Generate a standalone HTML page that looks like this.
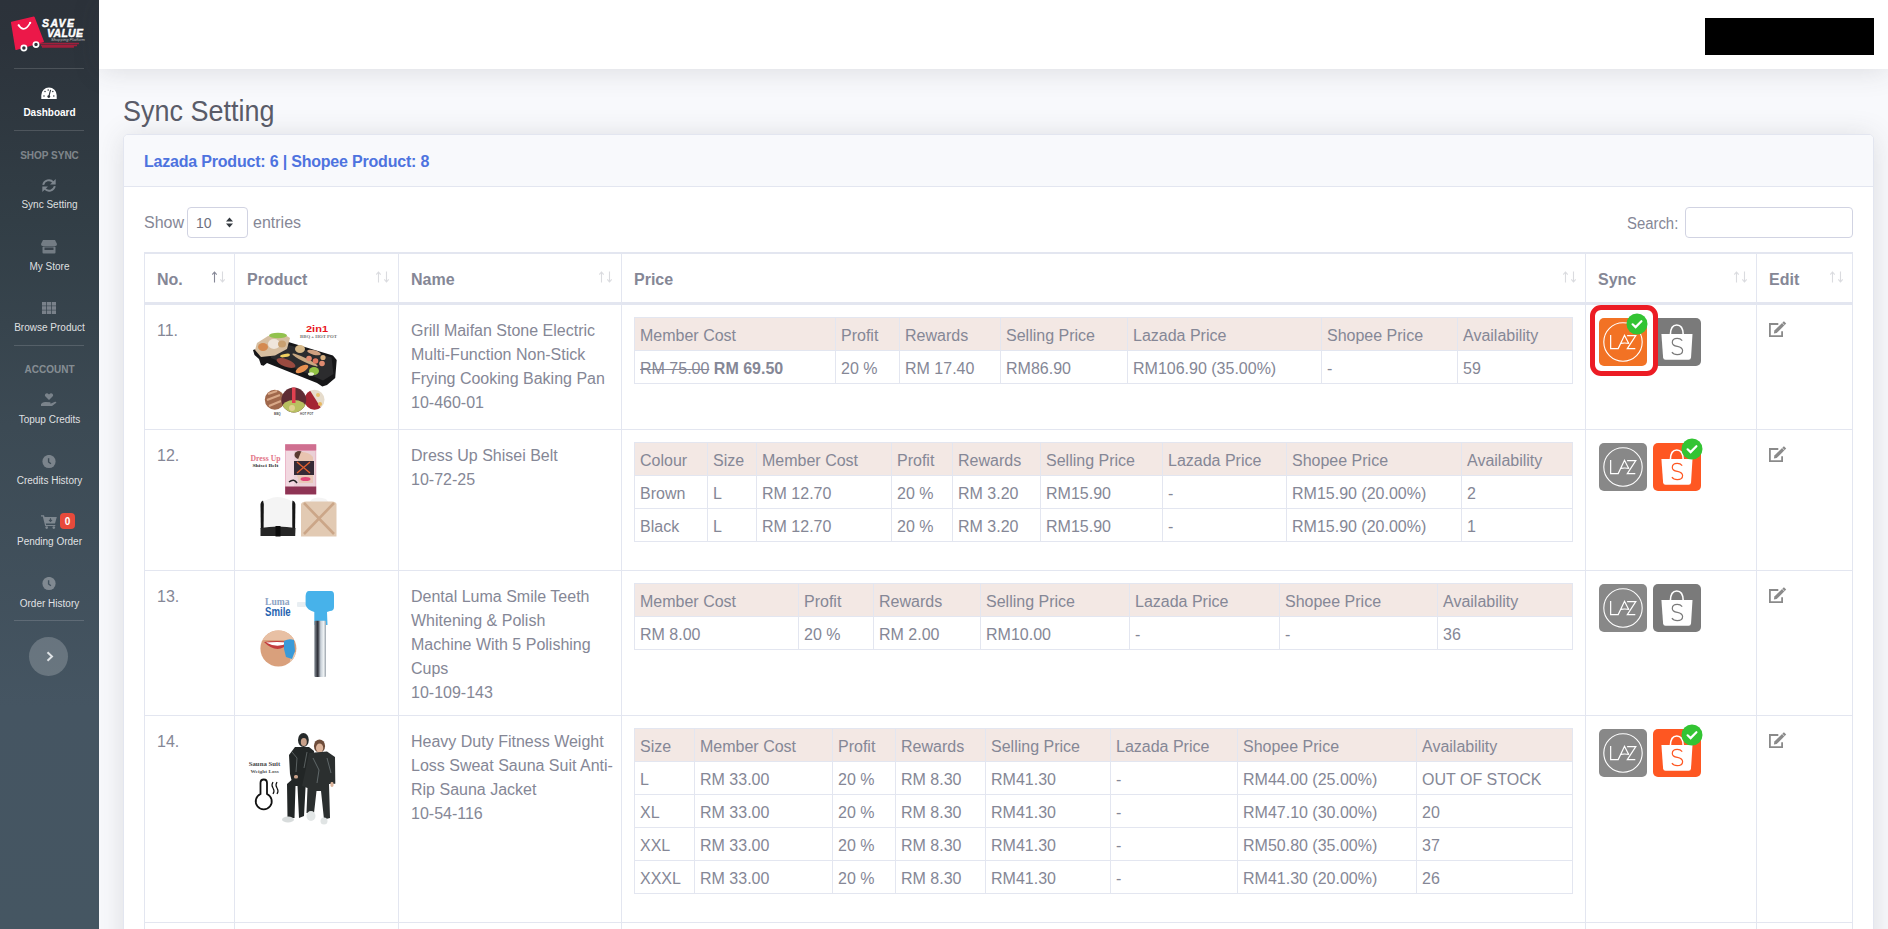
<!DOCTYPE html>
<html><head><meta charset="utf-8">
<style>
*{box-sizing:border-box;margin:0;padding:0}
html,body{width:1888px;height:929px;overflow:hidden;background:#f8f9fc;font-family:"Liberation Sans",sans-serif;color:#858796}
.abs{position:absolute}
#sidebar{position:absolute;left:0;top:0;width:99px;height:929px;background:linear-gradient(180deg,rgb(44,50,58) 0px,rgb(44,51,59) 40px,rgb(50,62,70) 221px,rgb(60,74,84) 426px,rgb(69,85,98) 706px,rgb(69,86,98) 929px)}
.sb-hr{position:absolute;left:14px;width:70px;height:1px;background:rgba(255,255,255,.15)}
.sb-lbl{position:absolute;left:0;width:99px;text-align:center;font-size:10px;line-height:12px;color:rgba(255,255,255,.85);white-space:nowrap}
.sb-head{position:absolute;left:0;width:99px;text-align:center;font-size:10px;line-height:12px;font-weight:bold;color:rgba(255,255,255,.4);white-space:nowrap}
.sb-ico{position:absolute}
#topbar{position:absolute;left:99px;top:0;width:1789px;height:69px;background:#fff;box-shadow:0 2px 28px 0 rgba(58,59,69,.15)}
#card{position:absolute;left:123px;top:134px;width:1751px;height:900px;background:#fff;border:1px solid #e3e6f0;border-radius:5px;box-shadow:0 2px 28px 0 rgba(58,59,69,.15);overflow:hidden}
#cardhead{position:absolute;left:0;top:0;width:100%;height:52px;background:#f8f9fc;border-bottom:1px solid #e3e6f0}
table{border-collapse:separate;border-spacing:0;table-layout:fixed}
#main{position:absolute;left:20px;top:117px;width:1709px;border-top:1px solid #e3e6f0;border-left:1px solid #e3e6f0}
#main>thead>tr>th,#main>tbody>tr>td{border-top:1px solid #e3e6f0;border-right:1px solid #e3e6f0;padding:12px 12px;vertical-align:top;font-size:16px;line-height:24px;text-align:left;white-space:nowrap}
#main>thead>tr>th{border-bottom:2px solid #e3e6f0;font-weight:bold;height:51px;position:relative;color:#858796;padding-top:14px;padding-bottom:10px}
#main>tbody>tr>td.tx{padding-top:14px;padding-bottom:10px}
.sort{position:absolute;right:8px;top:17px}
.inner{width:939px;border-top:1px solid #e3e6f0;border-left:1px solid #e3e6f0}
.inner th,.inner td{border-bottom:1px solid #e3e6f0;border-right:1px solid #e3e6f0;padding:5.5px 5px 2.5px;font-size:16px;line-height:24px;font-weight:normal;white-space:nowrap;overflow:hidden;text-align:left;vertical-align:top}
.inner th{background:#f3e8e4;padding-top:5.5px;padding-bottom:2.5px}
</style></head><body>
<svg width="0" height="0" style="position:absolute">
<defs>
<symbol id="laz" viewBox="0 0 48 48">
  <circle cx="24" cy="24" r="19.2" fill="none" stroke="#fff" stroke-width="1.1"/>
  <path d="M11.65,17.1 L11.65,30.6 L19.2,30.6 L25.5,17.3 L29.7,25.5 M21.9,25.4 Q26,24.6 30.2,25.5 M28.1,17.6 L36.8,17.6 L28.3,30.6 L36.3,30.6" fill="none" stroke="#fff" stroke-width="1.2" stroke-linejoin="miter"/>
</symbol>
<symbol id="shp" viewBox="0 0 48 48">
  <path d="M17.4,16.5 Q17.6,7 23.8,7 Q30,7 30.2,16.5" fill="none" stroke="#fff" stroke-width="1.6"/>
  <path d="M8.4,16.1 L39.5,16.1 L38,39.5 Q37.8,41.7 35.6,41.7 L12.5,41.7 Q10.3,41.7 10.1,39.5Z" fill="#fff"/>
</symbol>
<symbol id="chk" viewBox="0 0 22 22">
  <circle cx="11" cy="11" r="10.5" fill="#33c433"/>
  <path d="M6.6,11.3 L9.6,14.1 L15.4,8.2" fill="none" stroke="#fff" stroke-width="2.2" stroke-linecap="round"/>
</symbol>
<symbol id="edit" viewBox="0 0 18 17">
  <path d="M9.3,3 L0.9,3 L0.9,15.1 L13.1,15.1 L13.1,10.2" fill="none" stroke="#8a8a8a" stroke-width="1.8"/>
  <polygon points="4.9,12.4 5.4,9.6 14.9,0.3 17.2,2.5 7.7,12" fill="#8a8a8a"/>
  <path d="M13.2,2 L15.5,4.2" stroke="#fff" stroke-width=".7"/>
</symbol>
</defs></svg>

<div id="sidebar">
  <!-- logo -->
  <svg class="abs" style="left:0;top:0" width="99" height="60" viewBox="0 0 99 60">
    <polygon points="11.7,22.4 33.9,17.2 43.2,41.5 16.1,49.3" fill="#ec1849" stroke="#ec1849" stroke-width="1.5" stroke-linejoin="round"/>
    <path d="M18.7,25.3 Q24,33.5 30.2,22.8" fill="none" stroke="#fff" stroke-width="1.6" stroke-linecap="round"/>
    <circle cx="18.7" cy="25.3" r="1.1" fill="#fff"/><circle cx="30.2" cy="22.8" r="1.1" fill="#fff"/>
    <path d="M40,43.5 L79,43.5 M41,45.5 L77,45.5 M42,47 L74,47" stroke="#a11f3c" stroke-width="1.3"/>
    <circle cx="23.9" cy="48" r="2.6" fill="#2c323a" stroke="#fff" stroke-width="1.7"/>
    <circle cx="36" cy="44.6" r="2.6" fill="#2c323a" stroke="#fff" stroke-width="1.7"/>
    <text x="42" y="27" font-family="Liberation Sans" font-weight="bold" font-style="italic" font-size="10.5" fill="#fff" stroke="#fff" stroke-width=".45" textLength="32" lengthAdjust="spacing">SAVE</text>
    <text x="47" y="36.6" font-family="Liberation Sans" font-weight="bold" font-style="italic" font-size="10.5" fill="#fff" stroke="#fff" stroke-width=".45" textLength="36" lengthAdjust="spacing">VALUE</text>
    <text x="51" y="41" font-family="Liberation Sans" font-style="italic" font-size="2.6" fill="#bbb" textLength="34" lengthAdjust="spacingAndGlyphs">Shopping Platform</text>
  </svg>
  <div class="sb-hr" style="top:68px"></div>
  <!-- dashboard -->
  <svg class="sb-ico" style="left:41px;top:87px" width="16" height="12" viewBox="0 0 16 12"><path d="M0.3,12 L0.3,8.2 A7.7,7.7 0 0 1 15.7,8.2 L15.7,12Z" fill="#fff"/><path d="M7.8,9.6 L9.6,2.9" stroke="#2c323a" stroke-width="1.1"/><circle cx="7.8" cy="9.6" r="1.4" fill="#2c323a"/><circle cx="4" cy="4.6" r=".75" fill="#2c323a"/><circle cx="3" cy="9" r=".75" fill="#2c323a"/><circle cx="7.2" cy="3" r=".75" fill="#2c323a"/><circle cx="11.8" cy="4.6" r=".75" fill="#2c323a"/><circle cx="12.8" cy="9" r=".75" fill="#2c323a"/></svg>
  <div class="sb-lbl" style="top:107px;font-weight:bold;color:#fff">Dashboard</div>
  <div class="sb-hr" style="top:130px"></div>
  <div class="sb-head" style="top:150px">SHOP SYNC</div>
  <!-- sync icon -->
  <svg class="sb-ico" style="left:42px;top:179px" width="14" height="13" viewBox="0 0 14 13"><path d="M1.2,5.9 A5.8,5.8 0 0 1 11.3,3.3" fill="none" stroke="#7c858d" stroke-width="1.9"/><polygon points="8,5.6 13.7,5.6 13.7,0" fill="#7c858d"/><path d="M12.8,7.1 A5.8,5.8 0 0 1 2.7,9.7" fill="none" stroke="#7c858d" stroke-width="1.9"/><polygon points="6,7.4 0.3,7.4 0.3,13" fill="#7c858d"/></svg>
  <div class="sb-lbl" style="top:199px">Sync Setting</div>
  <!-- store -->
  <svg class="sb-ico" style="left:41px;top:240px" width="16" height="14" viewBox="0 0 16 14"><path d="M2,0 L14,0 L16,4 Q16,6 14.5,6 L1.5,6 Q0,6 0,4Z" fill="#737c84"/><rect x="1.5" y="6.5" width="13" height="7" rx="1" fill="#737c84"/><rect x="3.5" y="7.5" width="9" height="2.5" fill="#39434c"/></svg>
  <div class="sb-lbl" style="top:261px">My Store</div>
  <!-- grid -->
  <svg class="sb-ico" style="left:42px;top:302px" width="14" height="12" viewBox="0 0 14 12" fill="#79818a"><rect x="0.0" y="0.0" width="4.2" height="3.6"/><rect x="4.9" y="0.0" width="4.2" height="3.6"/><rect x="9.8" y="0.0" width="4.2" height="3.6"/><rect x="0.0" y="4.2" width="4.2" height="3.6"/><rect x="4.9" y="4.2" width="4.2" height="3.6"/><rect x="9.8" y="4.2" width="4.2" height="3.6"/><rect x="0.0" y="8.4" width="4.2" height="3.6"/><rect x="4.9" y="8.4" width="4.2" height="3.6"/><rect x="9.8" y="8.4" width="4.2" height="3.6"/></svg>
  <div class="sb-lbl" style="top:322px">Browse Product</div>
  <div class="sb-hr" style="top:345px"></div>
  <div class="sb-head" style="top:364px">ACCOUNT</div>
  <!-- topup -->
  <svg class="sb-ico" style="left:41px;top:393px" width="16" height="14" viewBox="0 0 16 14" fill="#7a838b"><path d="M8,7 L4.5,3.6 Q3.2,2 4.6,0.7 Q6.3,-0.3 8,1.5 Q9.7,-0.3 11.4,0.7 Q12.8,2 11.5,3.6Z"/><path d="M0,11 Q2,8.5 5,9 L9,9.2 Q10,9.6 9.3,10.4 L6.5,10.4 L10,10.6 L14,8.8 Q15.5,8.6 15.3,9.8 L11,13 L0,13Z"/></svg>
  <div class="sb-lbl" style="top:414px">Topup Credits</div>
  <!-- clock -->
  <svg class="sb-ico" style="left:42px;top:455px" width="14" height="14" viewBox="0 0 14 14"><circle cx="7" cy="6.5" r="6.6" fill="#7b848c"/><path d="M6.6,3.2 L6.6,7 L8.9,8.8" fill="none" stroke="#3c4a54" stroke-width="1.4"/></svg>
  <div class="sb-lbl" style="top:475px">Credits History</div>
  <!-- cart -->
  <svg class="sb-ico" style="left:41px;top:515px" width="16" height="14" viewBox="0 0 16 14" fill="#7f8890"><path d="M0,0.3 L3,0.3 L3.6,2 L15.8,2 L14,8.5 L4.8,8.5 L5.2,10 L14.3,10 L14.3,11 L4.2,11 L1.8,1.6 L0,1.6Z"/><circle cx="5.7" cy="12.6" r="1.3"/><circle cx="12.8" cy="12.6" r="1.3"/><path d="M9.5,3.3 L9.5,6.3 M8,4.9 L9.5,6.5 L11,4.9" stroke="#434f5a" stroke-width="1.1" fill="none"/></svg>
  <div class="abs" style="left:60px;top:513px;width:15px;height:16px;border-radius:4px;background:#e74a3b;color:#fff;font-size:10px;font-weight:bold;line-height:18px;text-align:center">0</div>
  <div class="sb-lbl" style="top:536px">Pending Order</div>
  <svg class="sb-ico" style="left:42px;top:577px" width="14" height="14" viewBox="0 0 14 14"><circle cx="7" cy="6.5" r="6.6" fill="#808991"/><path d="M6.6,3.2 L6.6,7 L8.9,8.8" fill="none" stroke="#42525e" stroke-width="1.4"/></svg>
  <div class="sb-lbl" style="top:598px">Order History</div>
  <div class="sb-hr" style="top:620px"></div>
  <div class="abs" style="left:29px;top:637px;width:39px;height:39px;border-radius:50%;background:rgba(255,255,255,.2)"></div>
  <svg class="abs" style="left:46px;top:651px" width="8" height="11" viewBox="0 0 8 11"><path d="M1.5,1.2 L6,5.5 L1.5,9.8" fill="none" stroke="#dfe3e6" stroke-width="2"/></svg>
</div>

<div id="topbar"><div class="abs" style="left:1606px;top:18px;width:169px;height:37px;background:#000"></div></div>

<div class="abs" style="left:123px;top:93px;font-size:29px;line-height:36px;transform:scaleX(.93);transform-origin:0 0;color:#5a5c69;white-space:nowrap">Sync Setting</div>

<div id="card">
  <div id="cardhead"><div class="abs" style="left:20px;top:15px;font-size:16px;line-height:24px;letter-spacing:-0.2px;font-weight:bold;color:#4e73df;white-space:nowrap">Lazada Product: 6 | Shopee Product: 8</div></div>
  <!-- show entries -->
  <div class="abs" style="left:20px;top:76px;font-size:16px;line-height:24px;white-space:nowrap">Show</div>
  <div class="abs" style="left:63px;top:72px;width:61px;height:31px;border:1px solid #d1d3e2;border-radius:4px;background:#fff">
    <div class="abs" style="left:8px;top:4px;font-size:14px;line-height:22px;color:#6e707e">10</div>
    <svg class="abs" style="left:38px;top:9px" width="7" height="11" viewBox="0 0 7 11" fill="#343a40"><path d="M0,4.5 L3.5,0.5 L7,4.5Z M0,6.5 L3.5,10.5 L7,6.5Z"/></svg>
  </div>
  <div class="abs" style="left:129px;top:76px;font-size:16px;line-height:24px;white-space:nowrap">entries</div>
  <div class="abs" style="left:1503px;top:77px;font-size:16px;line-height:24px;white-space:nowrap;transform:scaleX(.93);transform-origin:0 0">Search:</div>
  <div class="abs" style="left:1561px;top:72px;width:168px;height:31px;border:1px solid #d1d3e2;border-radius:4px;background:#fff"></div>

  <table id="main">
    <colgroup><col style="width:90px"><col style="width:164px"><col style="width:223px"><col style="width:964px"><col style="width:171px"><col style="width:96px"></colgroup>
    <thead><tr>
      <th>No.<svg class="sort" width="14" height="12" viewBox="0 0 14 12"><g fill="none" stroke-width="1.1"><path d="M2.5,11.5 L2.5,1 M0.3,3.6 L2.5,1 L4.7,3.6" stroke="#858796" stroke-opacity="1"/><path d="M10.5,0.5 L10.5,11 M8.3,8.4 L10.5,11 L12.7,8.4" stroke="#858796" stroke-opacity=".3"/></g></svg></th>
      <th>Product<svg class="sort" width="14" height="12" viewBox="0 0 14 12"><g fill="none" stroke-width="1.1"><path d="M2.5,11.5 L2.5,1 M0.3,3.6 L2.5,1 L4.7,3.6" stroke="#858796" stroke-opacity=".3"/><path d="M10.5,0.5 L10.5,11 M8.3,8.4 L10.5,11 L12.7,8.4" stroke="#858796" stroke-opacity=".3"/></g></svg></th>
      <th>Name<svg class="sort" width="14" height="12" viewBox="0 0 14 12"><g fill="none" stroke-width="1.1"><path d="M2.5,11.5 L2.5,1 M0.3,3.6 L2.5,1 L4.7,3.6" stroke="#858796" stroke-opacity=".3"/><path d="M10.5,0.5 L10.5,11 M8.3,8.4 L10.5,11 L12.7,8.4" stroke="#858796" stroke-opacity=".3"/></g></svg></th>
      <th>Price<svg class="sort" width="14" height="12" viewBox="0 0 14 12"><g fill="none" stroke-width="1.1"><path d="M2.5,11.5 L2.5,1 M0.3,3.6 L2.5,1 L4.7,3.6" stroke="#858796" stroke-opacity=".3"/><path d="M10.5,0.5 L10.5,11 M8.3,8.4 L10.5,11 L12.7,8.4" stroke="#858796" stroke-opacity=".3"/></g></svg></th>
      <th>Sync<svg class="sort" width="14" height="12" viewBox="0 0 14 12"><g fill="none" stroke-width="1.1"><path d="M2.5,11.5 L2.5,1 M0.3,3.6 L2.5,1 L4.7,3.6" stroke="#858796" stroke-opacity=".3"/><path d="M10.5,0.5 L10.5,11 M8.3,8.4 L10.5,11 L12.7,8.4" stroke="#858796" stroke-opacity=".3"/></g></svg></th>
      <th>Edit<svg class="sort" width="14" height="12" viewBox="0 0 14 12"><g fill="none" stroke-width="1.1"><path d="M2.5,11.5 L2.5,1 M0.3,3.6 L2.5,1 L4.7,3.6" stroke="#858796" stroke-opacity=".3"/><path d="M10.5,0.5 L10.5,11 M8.3,8.4 L10.5,11 L12.7,8.4" stroke="#858796" stroke-opacity=".3"/></g></svg></th>
    </tr></thead>
    <tbody>
      <tr style="height:125px">
        <td class="tx">11.</td>
        <td><svg style="display:block" width="100" height="100" viewBox="0 0 100 100">
<text x="59" y="15" font-family="Liberation Sans" font-weight="bold" font-size="9.5" fill="#e8141c" textLength="22" lengthAdjust="spacingAndGlyphs">2in1</text>
<text x="53" y="21" font-family="Liberation Serif" font-weight="bold" font-size="4.2" fill="#777" textLength="37" lengthAdjust="spacingAndGlyphs">BBQ + HOT POT</text>
<polygon points="6,33 20,28 41.4,24.9 85.9,38.4 89.7,43 88.2,61 80,68 75.3,69.5 70,66 20,46 16.6,48.8 14,48 12,42 7.5,38" fill="#161618"/>
<polygon points="40,27.5 84.5,40.5 86.5,57 76,63.5 24,41 22,34" fill="#2c2c2e"/>
<polygon points="8,33 10,26 21,19 36,16.5 43,21 40,32 28,38.5 14,40" fill="#d6bea0"/>
<ellipse cx="31" cy="18.5" rx="9" ry="2.8" fill="#92c24e"/>
<ellipse cx="16" cy="30" rx="5" ry="4" fill="#d48a50"/>
<ellipse cx="27" cy="27" rx="6" ry="5" fill="#efe6dc"/>
<ellipse cx="35" cy="27" rx="4" ry="3.5" fill="#c8a070"/>
<ellipse cx="39" cy="46" rx="10" ry="3.8" fill="#9a4a40" transform="rotate(20 39 46)"/>
<ellipse cx="38" cy="38.5" rx="5" ry="1.6" fill="#f0d060" transform="rotate(-10 38 38.5)"/>
<ellipse cx="58" cy="43" rx="14" ry="2" fill="#c8a882" transform="rotate(26 58 43)"/>
<ellipse cx="53" cy="32" rx="5" ry="4" fill="#d6b888"/>
<ellipse cx="67" cy="35.5" rx="7" ry="2.3" fill="#d0a080" transform="rotate(15 67 35.5)"/>
<circle cx="62" cy="41.5" r="2.8" fill="#e08a70"/><circle cx="68.5" cy="44" r="2.8" fill="#e07860"/><circle cx="75" cy="46.5" r="2.8" fill="#e08a70"/><circle cx="76" cy="40.5" r="2.6" fill="#d8b080"/>
<ellipse cx="55" cy="52" rx="7" ry="3" fill="#e89050" transform="rotate(-28 55 52)"/>
<ellipse cx="67" cy="54" rx="5" ry="4" fill="#92c244"/>
<ellipse cx="64" cy="57" rx="3" ry="1.8" fill="#e8f0d0"/>
<defs><clipPath id="c3"><circle cx="67.5" cy="82.8" r="10"/></clipPath><clipPath id="c2"><circle cx="46.8" cy="83" r="12.4"/></clipPath></defs>
<circle cx="27.8" cy="82.8" r="10" fill="#a0684c"/>
<path d="M21,77 L30,74 M20,83 L33,78 M22,89 L34,84" stroke="#d8a888" stroke-width="2.2"/>
<g clip-path="url(#c3)"><rect x="57" y="72" width="21" height="22" fill="#e6dccc"/><path d="M57,72 L62,72 L76,94 L57,94Z" fill="#a42432"/><circle cx="71" cy="78" r="2" fill="#e8c070"/><circle cx="73" cy="87" r="2" fill="#e8b860"/></g>
<g clip-path="url(#c2)"><rect x="34" y="70" width="26" height="26" fill="#5e2c34"/><ellipse cx="47" cy="91" rx="12" ry="8" fill="#b8c060"/><circle cx="45" cy="91" r="3" fill="#e0d090"/><rect x="45" y="70" width="3.5" height="16" fill="#e24050"/></g>
<text x="27" y="97.5" font-family="Liberation Sans" font-weight="bold" font-size="3" fill="#555">BBQ</text><text x="53" y="97.5" font-family="Liberation Sans" font-weight="bold" font-size="3" fill="#555">HOT POT</text>
</svg></td>
        <td class="tx">Grill Maifan Stone Electric<br>Multi-Function Non-Stick<br>Frying Cooking Baking Pan<br>10-460-01</td>
        <td><table class="inner"><colgroup><col style="width:201px"><col style="width:64px"><col style="width:101px"><col style="width:127px"><col style="width:194px"><col style="width:136px"><col style="width:115px"></colgroup><thead><tr><th>Member Cost</th><th>Profit</th><th>Rewards</th><th>Selling Price</th><th>Lazada Price</th><th>Shopee Price</th><th>Availability</th></tr></thead><tbody><tr><td><del>RM 75.00</del> <b>RM 69.50</b></td><td>20 %</td><td>RM 17.40</td><td>RM86.90</td><td>RM106.90 (35.00%)</td><td>-</td><td>59</td></tr></tbody></table></td>
        <td><div style="position:relative;left:1px;top:1px;width:110px;height:48px"><div style="position:absolute;left:0;top:0;width:48px;height:48px;border-radius:5px;background:#f27224"><svg width="48" height="48"><use href="#laz"/></svg></div><div style="position:absolute;left:54px;top:0;width:48px;height:48px;border-radius:5px;background:#7a7a7a"><svg width="48" height="48"><use href="#shp"/></svg><svg style="position:absolute;left:0;top:0" width="48" height="48"><path d="M29.2,22.6 Q27.4,20.4 24.3,20.4 Q19.3,20.4 19.3,24.4 Q19.3,27.4 24.3,28.4 Q29.6,29.5 29.6,32.6 Q29.6,36.7 24.2,36.7 Q20.6,36.7 18.9,34.2" fill="none" stroke="#7a7a7a" stroke-width="1.2"/></svg></div><svg style="position:absolute;left:27.3px;top:-4.8px" width="22" height="22"><use href="#chk"/></svg><div style="position:absolute;left:-9px;top:-13px;width:68px;height:71px;border:5px solid #ec1c24;border-radius:11px"></div></div></td>
        <td><svg style="position:relative;top:4px;display:block" width="18" height="17"><use href="#edit"/></svg></td>
      </tr>
      <tr style="height:141px">
        <td class="tx">12.</td><td><svg style="display:block" width="100" height="100" viewBox="0 0 100 100">
<text x="3.5" y="19" font-family="Liberation Serif" font-weight="bold" font-size="7.5" fill="#e27384" textLength="30" lengthAdjust="spacingAndGlyphs">Dress Up</text>
<text x="5.4" y="25" font-family="Liberation Serif" font-weight="bold" font-size="4.6" fill="#333" textLength="26" lengthAdjust="spacingAndGlyphs">Shisei Belt</text>
<rect x="38.2" y="2.3" width="31" height="50" fill="#e6a6bc"/>
<rect x="38.2" y="2.3" width="31" height="6" fill="#cf6f90"/>
<rect x="39" y="9" width="8" height="36" fill="#f2d8e0"/>
<rect x="47" y="9" width="21.5" height="36" fill="#ead0d6"/>
<ellipse cx="52" cy="13" rx="4.5" ry="4" fill="#5a3a30"/>
<path d="M54,10 Q62,10 66,15 L66,20 L50,20Z" fill="#e8c4b0"/>
<path d="M47,19 L67,19 L67,33 L47,33Z" fill="#352a36"/>
<path d="M50,20 L63,31 M63,20 L50,31" stroke="#e06030" stroke-width="1.4"/>
<path d="M50,33 L66,33 L66,41 L52,41Z" fill="#e8c8b8"/>
<ellipse cx="58.5" cy="37" rx="5" ry="2" fill="#e04878"/>
<path d="M42,40 Q47,36 50,41" stroke="#222" stroke-width="1.6" fill="none"/>
<rect x="38.2" y="44.5" width="31" height="7.9" fill="#8e3454"/>
<path d="M22,57 Q30,53 40,57 L47,60 L48,90 L14,90 L14,60Z" fill="#f4f4f4"/>
<path d="M16,58.5 Q14,59 13.5,62 L13.8,87 L16.6,87 L16.8,62Z" fill="#151515"/>
<path d="M45.5,58.5 Q48,59 48.4,62 L48.1,87 L45.3,87 L45.2,62Z" fill="#151515"/>
<path d="M13.5,86 Q31,83 48.5,86 L48.2,94 L13.5,94Z" fill="#262626"/>
<rect x="28.5" y="84" width="5" height="10.5" fill="#0c0c0c"/>
<path d="M65,57 Q71,54 79,57 L82,61 L62,61Z" fill="#f4f4f4"/>
<path d="M54,62 Q55,59.5 59,59.5 L85,59.5 Q89,59.5 89.5,62 L89.5,94.5 L54,94.5Z" fill="#e2cab3"/>
<path d="M57,61 L87,92 M87,61 L57,92" stroke="#cba688" stroke-width="2.6"/>
</svg></td>
        <td class="tx">Dress Up Shisei Belt<br>10-72-25</td>
        <td><table class="inner"><colgroup><col style="width:73px"><col style="width:49px"><col style="width:135px"><col style="width:61px"><col style="width:88px"><col style="width:122px"><col style="width:124px"><col style="width:175px"><col style="width:111px"></colgroup><thead><tr><th>Colour</th><th>Size</th><th>Member Cost</th><th>Profit</th><th>Rewards</th><th>Selling Price</th><th>Lazada Price</th><th>Shopee Price</th><th>Availability</th></tr></thead><tbody><tr><td>Brown</td><td>L</td><td>RM 12.70</td><td>20 %</td><td>RM 3.20</td><td>RM15.90</td><td>-</td><td>RM15.90 (20.00%)</td><td>2</td></tr><tr><td>Black</td><td>L</td><td>RM 12.70</td><td>20 %</td><td>RM 3.20</td><td>RM15.90</td><td>-</td><td>RM15.90 (20.00%)</td><td>1</td></tr></tbody></table></td><td><div style="position:relative;left:1px;top:1px;width:110px;height:48px"><div style="position:absolute;left:0;top:0;width:48px;height:48px;border-radius:5px;background:#888888"><svg width="48" height="48"><use href="#laz"/></svg></div><div style="position:absolute;left:54px;top:0;width:48px;height:48px;border-radius:5px;background:#fe5722"><svg width="48" height="48"><use href="#shp"/></svg><svg style="position:absolute;left:0;top:0" width="48" height="48"><path d="M29.2,22.6 Q27.4,20.4 24.3,20.4 Q19.3,20.4 19.3,24.4 Q19.3,27.4 24.3,28.4 Q29.6,29.5 29.6,32.6 Q29.6,36.7 24.2,36.7 Q20.6,36.7 18.9,34.2" fill="none" stroke="#fe5722" stroke-width="1.2"/></svg></div><svg style="position:absolute;left:81.5px;top:-4.8px" width="22" height="22"><use href="#chk"/></svg></div></td><td><svg style="position:relative;top:4px;display:block" width="18" height="17"><use href="#edit"/></svg></td>
      </tr>
      <tr style="height:145px">
        <td class="tx">13.</td><td><svg style="display:block" width="100" height="100" viewBox="0 0 100 100">
<defs><clipPath id="fc"><circle cx="31.4" cy="65.5" r="18"/></clipPath><linearGradient id="shaft" x1="0" x2="1" y1="0" y2="0"><stop offset="0" stop-color="#8a929a"/><stop offset=".3" stop-color="#2a2c34"/><stop offset=".55" stop-color="#c8d0d8"/><stop offset=".8" stop-color="#eef2f4"/><stop offset="1" stop-color="#9aa2aa"/></linearGradient></defs>
<text x="18" y="21.6" font-family="Liberation Serif" font-weight="bold" font-size="9.5" fill="#8ea4c4" textLength="24.5" lengthAdjust="spacingAndGlyphs">Luma</text>
<text x="18" y="32.7" font-family="Liberation Sans" font-weight="bold" font-size="12.5" fill="#2764b0" textLength="25.7" lengthAdjust="spacingAndGlyphs">Smile</text>
<g clip-path="url(#fc)">
<rect x="13" y="47" width="37" height="37" fill="#d9a07c"/>
<rect x="13" y="47" width="37" height="10" fill="#e8c0a4"/>
<path d="M17,59 Q30,57 43,59 Q31,73 17,59Z" fill="#c23c3c"/>
<path d="M19,59.5 Q30,58.5 41,59.5 Q31,66 19,59.5Z" fill="#fff"/>
<path d="M44,72 L50,68 L50,84 L42,84Z" fill="#e8c8b0"/>
</g>
<path d="M37,58 Q42,55 47,57 L48,68 L45,76 L39,74 L37,66Z" fill="#3a9ad8"/>
<rect x="50" y="19" width="9" height="5" rx="1" fill="#e8eef2"/>
<path d="M62,8 L84,8 Q87,8 87,12 L87,24 Q87,28 83,28 L80,29 L80.5,42 L67.3,42 L67.3,29 Q60,27 58.6,22 L58.6,13 Q59,8 62,8Z" fill="#47b2ea"/>
<rect x="67.3" y="37.7" width="11.7" height="56.3" rx="1" fill="url(#shaft)"/>
</svg></td>
        <td class="tx">Dental Luma Smile Teeth<br>Whitening &amp; Polish<br>Machine With 5 Polishing<br>Cups<br>10-109-143</td>
        <td><table class="inner"><colgroup><col style="width:164px"><col style="width:75px"><col style="width:107px"><col style="width:149px"><col style="width:150px"><col style="width:158px"><col style="width:135px"></colgroup><thead><tr><th>Member Cost</th><th>Profit</th><th>Rewards</th><th>Selling Price</th><th>Lazada Price</th><th>Shopee Price</th><th>Availability</th></tr></thead><tbody><tr><td>RM 8.00</td><td>20 %</td><td>RM 2.00</td><td>RM10.00</td><td>-</td><td>-</td><td>36</td></tr></tbody></table></td><td><div style="position:relative;left:1px;top:1px;width:110px;height:48px"><div style="position:absolute;left:0;top:0;width:48px;height:48px;border-radius:5px;background:#888888"><svg width="48" height="48"><use href="#laz"/></svg></div><div style="position:absolute;left:54px;top:0;width:48px;height:48px;border-radius:5px;background:#7a7a7a"><svg width="48" height="48"><use href="#shp"/></svg><svg style="position:absolute;left:0;top:0" width="48" height="48"><path d="M29.2,22.6 Q27.4,20.4 24.3,20.4 Q19.3,20.4 19.3,24.4 Q19.3,27.4 24.3,28.4 Q29.6,29.5 29.6,32.6 Q29.6,36.7 24.2,36.7 Q20.6,36.7 18.9,34.2" fill="none" stroke="#7a7a7a" stroke-width="1.2"/></svg></div></div></td><td><svg style="position:relative;top:4px;display:block" width="18" height="17"><use href="#edit"/></svg></td>
      </tr>
      <tr style="height:207px">
        <td class="tx">14.</td><td><svg style="display:block" width="100" height="100" viewBox="0 0 100 100">
<text x="1.7" y="38" font-family="Liberation Serif" font-weight="bold" font-size="6.5" fill="#4a4a4a" textLength="31.5" lengthAdjust="spacingAndGlyphs">Sauna Suit</text>
<text x="3.5" y="45.4" font-family="Liberation Serif" font-weight="bold" font-size="4.8" fill="#555" textLength="28.5" lengthAdjust="spacingAndGlyphs">Weight Loss</text>
<path d="M13.5,66 L13.5,55 Q13.5,51.5 16.8,51.5 Q20,51.5 20,55 L20,66 A8,8 0 1 1 13.5,66Z" fill="none" stroke="#111" stroke-width="1.8"/>
<path d="M26,54 Q24,57 26,60 Q28,63 26,66 M30,54 Q28,57 30,60 Q32,63 30,66" fill="none" stroke="#111" stroke-width="1.2"/>
<ellipse cx="56.4" cy="12" rx="5.4" ry="7" fill="#262a2a"/>
<ellipse cx="56.8" cy="14" rx="3" ry="4" fill="#c9a18a"/>
<path d="M48,19 L62,19 L67,23 L66,49 L59,51 L57,88 L52,90 L50.5,58 L48.5,58 L47.5,90 L40.5,90 L40,56 L44.5,52 L43,46 L42,27Z" fill="#222626"/>
<path d="M45,24 L50,30 L49,44 M60,24 L57,40" stroke="#5a6060" stroke-width="1" fill="none"/>
<rect x="47" y="47" width="4" height="3.5" rx="1.5" fill="#c9a18a"/>
<ellipse cx="72.5" cy="18" rx="5.6" ry="6.6" fill="#6e4c3a"/>
<ellipse cx="72.6" cy="20" rx="3.6" ry="4.6" fill="#ddb59c"/>
<path d="M62,25 L80,23.5 L88,29 L88.3,55.8 L82,56 L83,90 L77,91.5 L74,63 L69.5,63 L67,85 L59.5,85 L60.5,60 L55,58 L59,40Z" fill="#2b2f2f"/>
<path d="M66,30 L72,42 L70,55 M80,30 L84,45" stroke="#60686a" stroke-width="1" fill="none"/>
<rect x="83.5" y="54" width="3" height="5" rx="1.4" fill="#ddb59c"/>
<ellipse cx="41" cy="91.5" rx="6" ry="3" fill="#d8dcdc"/>
<ellipse cx="64" cy="88" rx="4.5" ry="5" fill="#e2e6e6"/>
<ellipse cx="77" cy="93" rx="3.5" ry="3.5" fill="#e0e4e4"/>
</svg></td>
        <td class="tx">Heavy Duty Fitness Weight<br>Loss Sweat Sauna Suit Anti-<br>Rip Sauna Jacket<br>10-54-116</td>
        <td><table class="inner"><colgroup><col style="width:60px"><col style="width:138px"><col style="width:63px"><col style="width:90px"><col style="width:125px"><col style="width:127px"><col style="width:179px"><col style="width:156px"></colgroup><thead><tr><th>Size</th><th>Member Cost</th><th>Profit</th><th>Rewards</th><th>Selling Price</th><th>Lazada Price</th><th>Shopee Price</th><th>Availability</th></tr></thead><tbody><tr><td>L</td><td>RM 33.00</td><td>20 %</td><td>RM 8.30</td><td>RM41.30</td><td>-</td><td>RM44.00 (25.00%)</td><td>OUT OF STOCK</td></tr><tr><td>XL</td><td>RM 33.00</td><td>20 %</td><td>RM 8.30</td><td>RM41.30</td><td>-</td><td>RM47.10 (30.00%)</td><td>20</td></tr><tr><td>XXL</td><td>RM 33.00</td><td>20 %</td><td>RM 8.30</td><td>RM41.30</td><td>-</td><td>RM50.80 (35.00%)</td><td>37</td></tr><tr><td>XXXL</td><td>RM 33.00</td><td>20 %</td><td>RM 8.30</td><td>RM41.30</td><td>-</td><td>RM41.30 (20.00%)</td><td>26</td></tr></tbody></table></td><td><div style="position:relative;left:1px;top:1px;width:110px;height:48px"><div style="position:absolute;left:0;top:0;width:48px;height:48px;border-radius:5px;background:#888888"><svg width="48" height="48"><use href="#laz"/></svg></div><div style="position:absolute;left:54px;top:0;width:48px;height:48px;border-radius:5px;background:#fe5722"><svg width="48" height="48"><use href="#shp"/></svg><svg style="position:absolute;left:0;top:0" width="48" height="48"><path d="M29.2,22.6 Q27.4,20.4 24.3,20.4 Q19.3,20.4 19.3,24.4 Q19.3,27.4 24.3,28.4 Q29.6,29.5 29.6,32.6 Q29.6,36.7 24.2,36.7 Q20.6,36.7 18.9,34.2" fill="none" stroke="#fe5722" stroke-width="1.2"/></svg></div><svg style="position:absolute;left:81.5px;top:-4.8px" width="22" height="22"><use href="#chk"/></svg></div></td><td><svg style="position:relative;top:4px;display:block" width="18" height="17"><use href="#edit"/></svg></td>
      </tr>
      <tr style="height:200px"><td></td><td></td><td></td><td></td><td></td><td></td></tr>
    </tbody>
  </table>
</div>
</body></html>
